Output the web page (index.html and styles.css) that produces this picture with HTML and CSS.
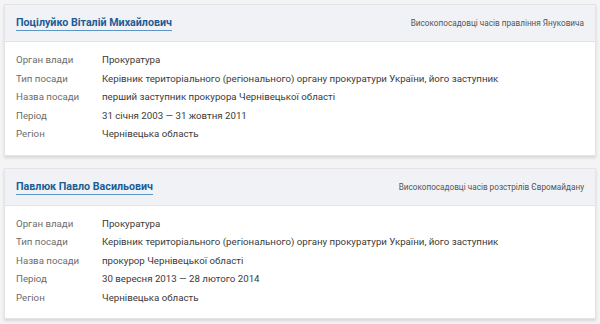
FILE: index.html
```html
<!doctype html>
<html>
  <head>
    <meta charset="UTF-8" />
    <title>Високопосадовці</title>
    <link rel="stylesheet" href="styles.css">
  </head>
  <body>
    <div class="card">
      <div class="card-head">
        <a class="name" href="#">Поцілуйко Віталій Михайлович</a>
        <span class="tag">Високопосадовці часів правління Януковича</span>
      </div>
      <div class="card-body">
        <div class="row"><span class="label">Орган влади</span><span class="value">Прокуратура</span></div>
        <div class="row"><span class="label">Тип посади</span><span class="value">Керівник територіального (регіонального) органу прокуратури України, його заступник</span></div>
        <div class="row"><span class="label">Назва посади</span><span class="value">перший заступник прокурора Чернівецької області</span></div>
        <div class="row"><span class="label">Період</span><span class="value">31 січня 2003 — 31 жовтня 2011</span></div>
        <div class="row"><span class="label">Регіон</span><span class="value">Чернівецька область</span></div>
      </div>
    </div>

    <div class="card">
      <div class="card-head">
        <a class="name" href="#">Павлюк Павло Васильович</a>
        <span class="tag">Високопосадовці часів розстрілів Євромайдану</span>
      </div>
      <div class="card-body">
        <div class="row"><span class="label">Орган влади</span><span class="value">Прокуратура</span></div>
        <div class="row"><span class="label">Тип посади</span><span class="value">Керівник територіального (регіонального) органу прокуратури України, його заступник</span></div>
        <div class="row"><span class="label">Назва посади</span><span class="value">прокурор Чернівецької області</span></div>
        <div class="row"><span class="label">Період</span><span class="value">30 вересня 2013 — 28 лютого 2014</span></div>
        <div class="row"><span class="label">Регіон</span><span class="value">Чернівецька область</span></div>
      </div>
    </div>
  </body>
</html>
```

FILE: styles.css
```css
html {
  background-color: #f4f4f5;
}

body {
  margin: 0;
  padding: 4px 4px 0;
  font-family: Roboto, "Open Sans", sans-serif;
  font-size: 9.7px;
  color: #3a3a3a;
}

.card {
  background-color: #fff;
  border: 1px solid #e4e4e8;
  box-shadow: 0 2px 3px rgba(0, 0, 0, 0.12);
  margin-bottom: 12px;
}

.card-head {
  display: flex;
  align-items: center;
  justify-content: space-between;
  height: 36px;
  padding: 0 11px;
  background-color: #f1f2f6;
  border-bottom: 1px solid #e2e3e8;
}

.name {
  font-size: 10.7px;
  font-weight: 700;
  color: #1d5d95;
  text-decoration: none;
  border-bottom: 1px solid #5d95c4;
  line-height: 15px;
}

.tag {
  font-size: 8.2px;
  color: #555;
}

.card-body {
  padding: 9px 11px 11px;
}

.row {
  display: flex;
  line-height: 18.5px;
}

.label {
  width: 86px;
  flex-shrink: 0;
  color: #6c6c6c;
}

.value {
  color: #3a3a3a;
}
```
